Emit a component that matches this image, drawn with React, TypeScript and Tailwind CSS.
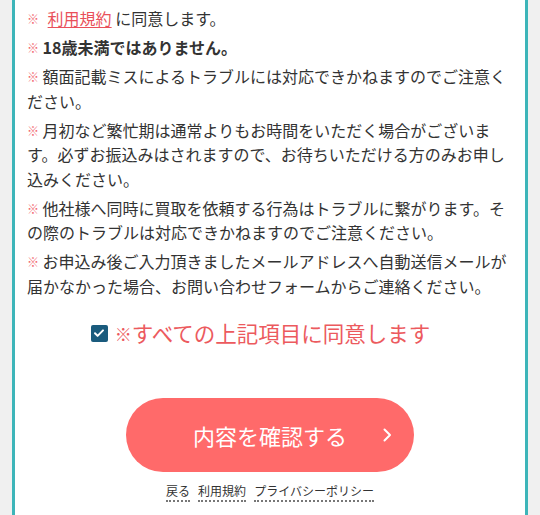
import React from 'react';

const FONT = { fontFamily: '"Noto Sans CJK JP", "Noto Sans", sans-serif' };

const Mark: React.FC = () => (
  <span className="align-[1px] text-[12px] leading-none font-bold text-[#f26a72]">※</span>
);

const notes: React.ReactNode[] = [
  <>
    <Mark /> <a className="ml-[5px] text-[#e9505a] underline underline-offset-2 decoration-1">利用規約</a> に同意します。
  </>,
  <>
    <Mark /> <span className="font-bold">18歳未満ではありません。</span>
  </>,
  <>
    <Mark /> 額面記載ミスによるトラブルには対応できかねますのでご注意ください。
  </>,
  <>
    <Mark /> 月初など繁忙期は通常よりもお時間をいただく場合がございます。必ずお振込みはされますので、お待ちいただける方のみお申し込みください。
  </>,
  <>
    <Mark /> 他社様へ同時に買取を依頼する行為はトラブルに繋がります。その際のトラブルは対応できかねますのでご注意ください。
  </>,
  <>
    <Mark /> お申込み後ご入力頂きましたメールアドレスへ自動送信メールが届かなかった場合、お問い合わせフォームからご連絡ください。
  </>,
];

export default function App() {
  return (
    <div className="min-h-[515px] bg-[#f0f0f0] px-[12px]" style={FONT}>
      <div className="min-h-[515px] border-x-[3px] border-[#3db5b9] bg-white px-[12px] pt-[6px]">
        {/* 注意事項 */}
        <ul className="text-[16px] leading-[24.5px] text-[#333]">
          {notes.map((n, i) => (
            <li key={i} className="mb-[4.6px]">
              {n}
            </li>
          ))}
        </ul>

        {/* 同意チェック */}
        <label className="mt-[20px] flex items-center justify-center pr-[19px]">
          <span className="flex h-[17px] w-[17px] items-center justify-center rounded-[2px] bg-[#1a5b7d]">
            <svg width="12" height="12" viewBox="0 0 12 12" fill="none">
              <path d="M2 6.3l2.6 2.6L10 3.4" stroke="#fff" strokeWidth="2" strokeLinecap="round" strokeLinejoin="round" />
            </svg>
          </span>
          <span className="ml-[7px] text-[21.5px] leading-[30px] text-[#ec5a5e]">
            <span className="align-[1px] text-[17px] leading-none font-bold">※</span>すべての上記項目に同意します
          </span>
        </label>

        {/* 確認ボタン */}
        <button className="relative mx-auto mt-[50px] flex h-[74px] w-[288px] items-center justify-center rounded-full bg-[#ff6a6a] text-[22px] text-white">
          内容を確認する
          <svg className="absolute right-[22px] top-1/2 -translate-y-1/2" width="10" height="14" viewBox="0 0 10 14" fill="none">
            <path d="M2.5 1.5L8 7l-5.5 5.5" stroke="#fff" strokeWidth="2" strokeLinecap="round" strokeLinejoin="round" />
          </svg>
        </button>

        {/* フッターリンク */}
        <div className="mt-[11px] flex justify-center gap-[8px] text-[12px] leading-[16px] text-[#333]">
          <a className="border-b-2 border-dotted border-[#777] pb-[1px]">戻る</a>
          <a className="border-b-2 border-dotted border-[#777] pb-[1px]">利用規約</a>
          <a className="border-b-2 border-dotted border-[#777] pb-[1px]">プライバシーポリシー</a>
        </div>
      </div>
    </div>
  );
}
